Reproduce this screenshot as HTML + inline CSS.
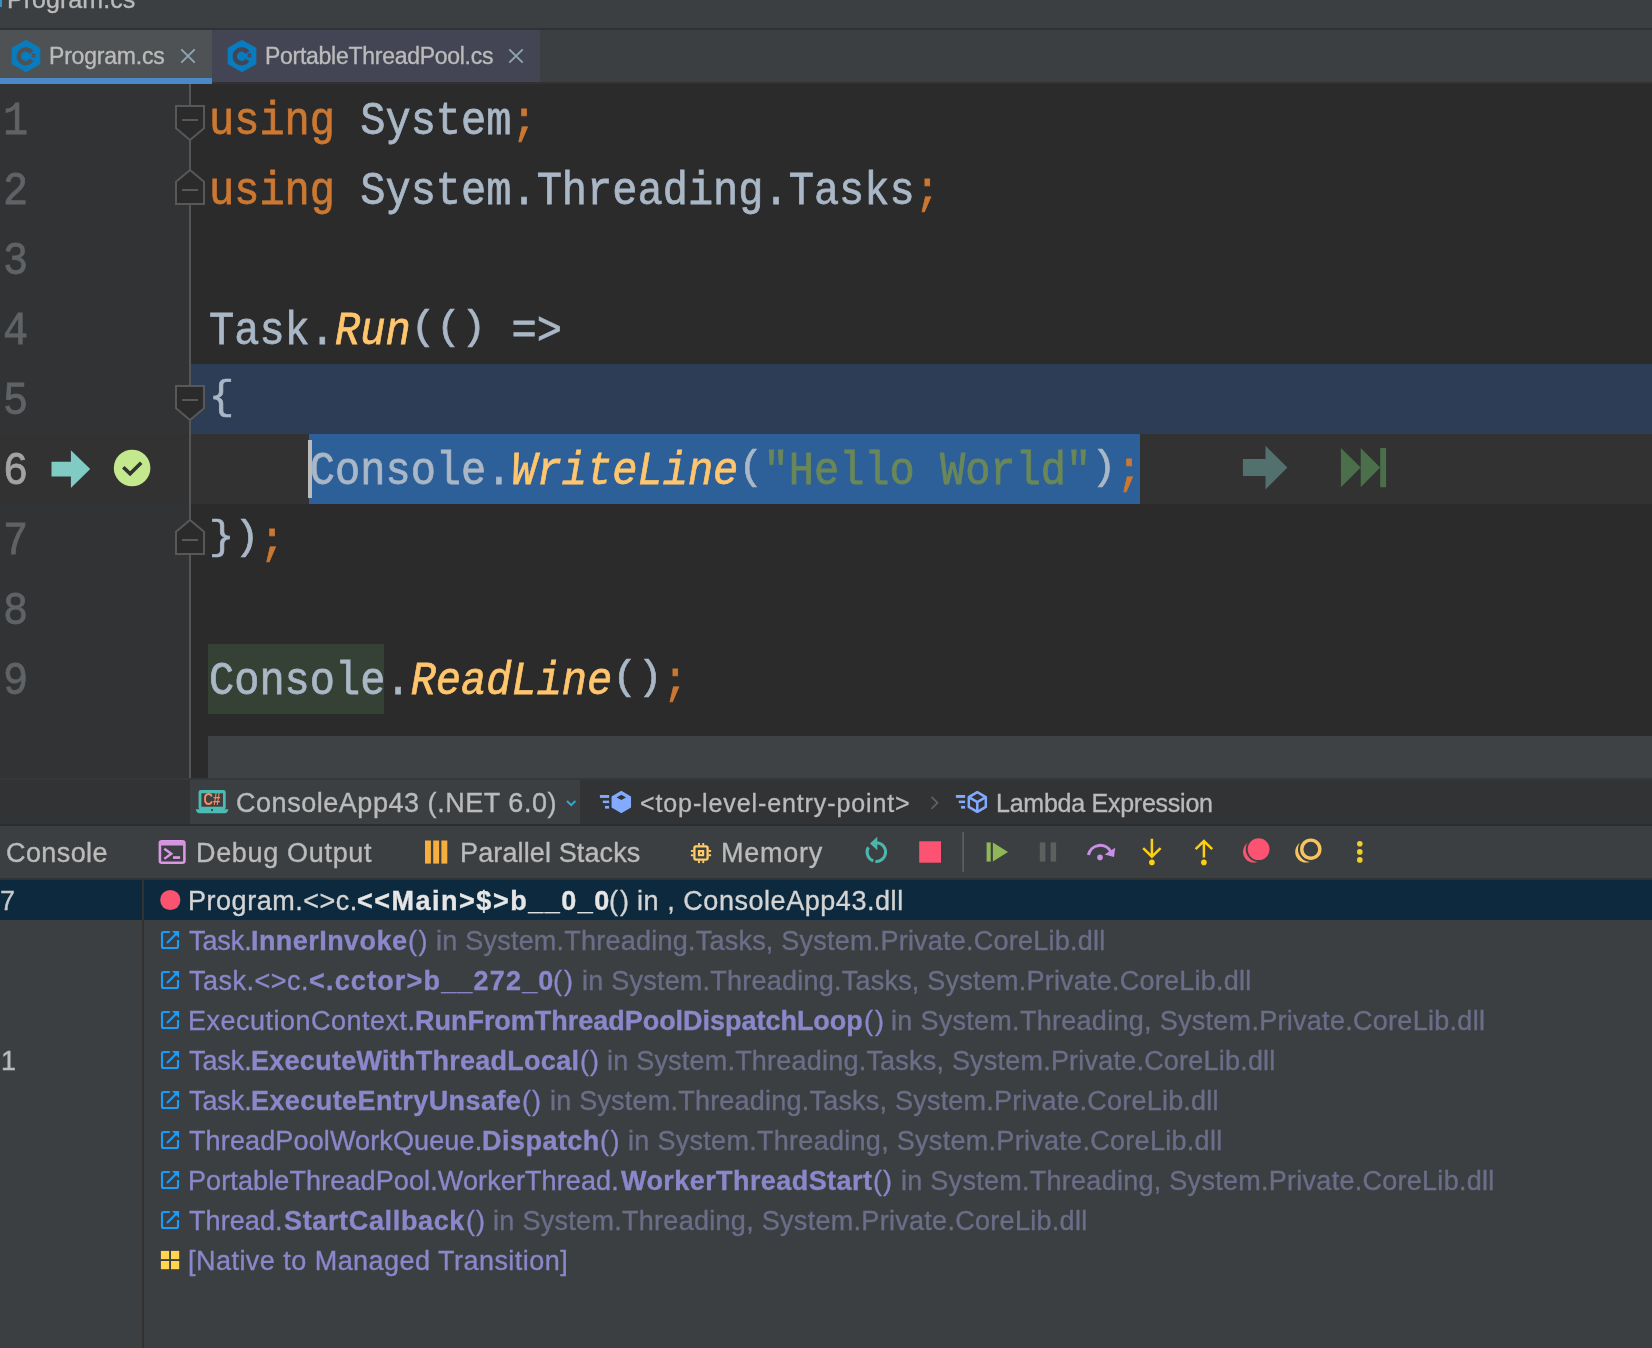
<!DOCTYPE html>
<html>
<head>
<meta charset="utf-8">
<title>Rider</title>
<style>
*{box-sizing:border-box;margin:0;padding:0}
html,body{width:1652px;height:1348px;overflow:hidden;background:#3c3f41}
body{position:relative;font-family:"Liberation Sans",sans-serif;color:#bbbbbb}
.a{position:absolute}
.t{position:absolute;white-space:pre;font-family:"Liberation Sans",sans-serif;will-change:transform;-webkit-text-stroke:0.35px currentColor}
svg{position:absolute;overflow:visible}
.ln,.code{position:absolute;font-family:"Liberation Mono",monospace;font-size:42px;line-height:70px;height:70px;white-space:pre;transform-origin:0 9.6px;transform:scaleY(1.11);-webkit-text-stroke:0.7px currentColor;will-change:transform}
.ln{left:3.4px;color:#606366}
.code{left:209px;color:#a9b7c6}
.p{display:inline-block;transform:scaleY(.86);transform-origin:50% 14px}
.k{color:#cc7832}
.m{color:#ffc66d;font-style:italic}
.s{color:#6a8759}
</style>
</head>
<body>
<div class="a" style="left:0px;top:0px;width:1652px;height:28px;background:#3c3f41;"></div>
<div class="a" style="left:0px;top:0px;width:1.5px;height:7px;background:#3592c4;"></div>
<div class="a" style="left:0px;top:28px;width:1652px;height:2px;background:#313233;"></div>
<div class="a" style="left:0px;top:30px;width:1652px;height:52px;background:#3c3f41;"></div>
<div class="a" style="left:0px;top:30px;width:212px;height:52px;background:#4e5254;"></div>
<div class="a" style="left:212px;top:30px;width:328px;height:52px;background:#434554;"></div>
<div class="a" style="left:0px;top:82px;width:1652px;height:2px;background:#323232;"></div>
<div class="a" style="left:0px;top:78px;width:212px;height:6px;background:#4a88c7;"></div>
<svg style="left:0;top:0" width="1652" height="100"><polygon points="26.00,40.20 39.90,48.10 39.90,63.90 26.00,71.80 12.10,63.90 12.10,48.10" fill="#087cbf" stroke="#087cbf" stroke-width="0.8" stroke-linejoin="round"/><path d="M31.49 52.54 A6.9 6.9 0 1 0 31.49 60.06" fill="none" stroke="#4e5254" stroke-width="4.4"/><g stroke="#4e5254" stroke-width="0.9" fill="none"><path d="M32.6 53.199999999999996V57.6M34.4 53.199999999999996V57.6M31.5 54.5H35.5M31.5 56.3H35.5"/></g></svg>
<svg style="left:0;top:0" width="1652" height="100"><polygon points="242.00,40.20 255.90,48.10 255.90,63.90 242.00,71.80 228.10,63.90 228.10,48.10" fill="#087cbf" stroke="#087cbf" stroke-width="0.8" stroke-linejoin="round"/><path d="M247.49 52.54 A6.9 6.9 0 1 0 247.49 60.06" fill="none" stroke="#434554" stroke-width="4.4"/><g stroke="#434554" stroke-width="0.9" fill="none"><path d="M248.6 53.199999999999996V57.6M250.4 53.199999999999996V57.6M247.5 54.5H251.5M247.5 56.3H251.5"/></g></svg>
<svg style="left:0;top:0" width="1652" height="100"><path d="M181.3 49.3L194.7 62.7M194.7 49.3L181.3 62.7" stroke="#8fa6b1" stroke-width="1.9" fill="none"/></svg>
<svg style="left:0;top:0" width="1652" height="100"><path d="M509.3 49.3L522.7 62.7M522.7 49.3L509.3 62.7" stroke="#8fa6b1" stroke-width="1.9" fill="none"/></svg>
<div class="a" style="left:0px;top:84px;width:1652px;height:695px;background:#2b2b2b;"></div>
<div class="a" style="left:0px;top:84px;width:190px;height:695px;background:#313335;"></div>
<div class="a" style="left:191px;top:364px;width:1461px;height:70px;background:#2e3d56;"></div>
<div class="a" style="left:0px;top:434px;width:1652px;height:70px;background:#323232;"></div>
<div class="a" style="left:309px;top:434px;width:831px;height:70px;background:#2d5f99;"></div>
<div class="a" style="left:208px;top:644px;width:176px;height:70px;background:#344134;"></div>
<div class="a" style="left:208px;top:736px;width:1444px;height:43px;background:#3e4244;"></div>
<div class="a" style="left:189px;top:84px;width:2px;height:695px;background:#555555;"></div>
<div class="a" style="left:308px;top:440px;width:4px;height:58px;background:#bbbbbb;"></div>
<div class="ln" style="top:84px;color:#606366">1</div>
<div class="code" style="top:84px"><span class="k">using</span> System<span class="k">;</span></div>
<div class="ln" style="top:154px;color:#606366">2</div>
<div class="code" style="top:154px"><span class="k">using</span> System.Threading.Tasks<span class="k">;</span></div>
<div class="ln" style="top:224px;color:#606366">3</div>
<div class="ln" style="top:294px;color:#606366">4</div>
<div class="code" style="top:294px">Task.<span class="m">Run</span><span class="p">(</span><span class="p">(</span><span class="p">)</span> =&gt;</div>
<div class="ln" style="top:364px;color:#606366">5</div>
<div class="code" style="top:364px"><span class="p">{</span></div>
<div class="ln" style="top:434px;color:#a4a3a3">6</div>
<div class="code" style="top:434px">    Console.<span class="m">WriteLine</span><span class="p">(</span><span class="s">"Hello World"</span><span class="p">)</span><span class="k">;</span></div>
<div class="ln" style="top:504px;color:#606366">7</div>
<div class="code" style="top:504px"><span class="p">}</span><span class="p">)</span><span class="k">;</span></div>
<div class="ln" style="top:574px;color:#606366">8</div>
<div class="ln" style="top:644px;color:#606366">9</div>
<div class="code" style="top:644px">Console.<span class="m">ReadLine</span><span class="p">(</span><span class="p">)</span><span class="k">;</span></div>
<svg style="left:0;top:0" width="300" height="800"><path d="M176 106H204V128.3L190 140L176 128.3Z" fill="#2b2b2b" stroke="#585858" stroke-width="2"/><path d="M182 120H198" stroke="#585858" stroke-width="2"/></svg>
<svg style="left:0;top:0" width="300" height="800"><path d="M190 170L204 181.7V204H176V181.7Z" fill="#2b2b2b" stroke="#585858" stroke-width="2"/><path d="M182 190H198" stroke="#585858" stroke-width="2"/></svg>
<svg style="left:0;top:0" width="300" height="800"><path d="M176 386H204V408.3L190 420L176 408.3Z" fill="#2b2b2b" stroke="#585858" stroke-width="2"/><path d="M182 400H198" stroke="#585858" stroke-width="2"/></svg>
<svg style="left:0;top:0" width="300" height="800"><path d="M190 520L204 531.7V554H176V531.7Z" fill="#2b2b2b" stroke="#585858" stroke-width="2"/><path d="M182 540H198" stroke="#585858" stroke-width="2"/></svg>
<svg style="left:0;top:0" width="1652" height="800"><path d="M51.5 461.8H70.9V450.3L90.2 469L70.9 488V476.4H51.5Z" fill="#80cbc4"/><circle cx="132.1" cy="468" r="18.3" fill="#c3e88d"/><path d="M123.3 467.3L130.1 473.8L141.2 462.8" fill="none" stroke="#323232" stroke-width="3.6"/><path d="M1242.9 459H1265.5V445.8L1287.4 467.4L1265.5 489.4V476H1242.9Z" fill="#52706e"/><path d="M1340.9 447.9L1360.7 467.6L1340.9 487.3ZM1360.7 447.9L1380.2 467.6L1360.7 487.3ZM1380.2 447.9H1386.1V487.3H1380.2Z" fill="#4a6f4a"/></svg>
<div class="a" style="left:0px;top:780px;width:1652px;height:46px;background:#313335;"></div>
<div class="a" style="left:0px;top:778px;width:1652px;height:2px;background:#35383a;"></div>
<div class="a" style="left:190px;top:780px;width:390px;height:44px;background:#3c3f41;"></div>
<div class="a" style="left:0px;top:824px;width:1652px;height:2px;background:#2b2d2e;"></div>
<svg style="left:0;top:0" width="1652" height="900"><rect x="198.6" y="789.9" width="27.1" height="20" rx="2.4" fill="#4dbbb1"/><rect x="201.4" y="793.3" width="21.6" height="13.4" fill="#3c3f41"/><path d="M195.8 809.2H228.3C228.3 811.5 226.5 813.2 224.8 813.2H199.3C197.5 813.2 195.8 811.5 195.8 809.2Z" fill="#4dbbb1"/><circle cx="212" cy="810" r="1" fill="#3c2a2e"/><text x="203.6" y="805.4" font-family="Liberation Sans" font-weight="700" font-size="15.6" fill="#fb8c5f" textLength="16.8" lengthAdjust="spacingAndGlyphs">C#</text><path d="M567 801L571.2 805.2L575.4 801" fill="none" stroke="#2fa9d1" stroke-width="2"/></svg>
<svg style="left:0;top:0" width="1652" height="900"><rect x="599.9" y="795" width="9.2" height="2.9" fill="#82aaff"/><rect x="602.8" y="800.6" width="6.3" height="2.5" fill="#82aaff"/><rect x="605.0" y="805.9" width="4.1" height="2.7" fill="#82aaff"/><polygon points="621.30,790.80 631.05,796.40 631.05,807.60 621.30,813.20 611.55,807.60 611.55,796.40" fill="#82aaff"/><polygon points="621.2999999999998,794.6999999999999 625.9999999999999,797.4 621.2999999999998,800.1 616.5999999999998,797.4" fill="#313335"/></svg>
<svg style="left:0;top:0" width="1652" height="900"><rect x="955.9" y="795" width="9.2" height="2.9" fill="#82aaff"/><rect x="958.8" y="800.6" width="6.3" height="2.5" fill="#82aaff"/><rect x="961.0" y="805.9" width="4.1" height="2.7" fill="#82aaff"/><polygon points="977.30,792.20 985.80,797.10 985.80,806.90 977.30,811.80 968.80,806.90 968.80,797.10" fill="none" stroke="#82aaff" stroke-width="2.5" stroke-linejoin="round"/><path d="M968.7999999999998 797.1L977.2999999999998 802L985.7999999999998 797.1M977.2999999999998 802V811.8" fill="none" stroke="#82aaff" stroke-width="2.5"/></svg>
<svg style="left:0;top:0" width="1652" height="900"><path d="M931.5 796.8L937.5 802.8L931.5 808.8" fill="none" stroke="#606365" stroke-width="1.7"/></svg>
<div class="a" style="left:0px;top:826px;width:1652px;height:52px;background:#3c3f41;"></div>
<div class="a" style="left:0px;top:878px;width:1652px;height:2px;background:#323232;"></div>
<svg style="left:0;top:0" width="1652" height="900"><rect x="159.9" y="841.2" width="24.5" height="21.6" rx="2" fill="none" stroke="#d997e5" stroke-width="2.6"/><rect x="159.9" y="841.2" width="24.5" height="4.3" fill="#d196dc"/><path d="M164.3 848.7L171.3 853.8L164.3 858.9" fill="none" stroke="#d997e5" stroke-width="2.4"/><rect x="173" y="856.2" width="7.1" height="2.7" fill="#d997e5"/><rect x="425" y="840.5" width="5.9" height="23.1" fill="#f6ae3e"/><rect x="433.2" y="840.5" width="5.9" height="23.1" fill="#f6ae3e"/><rect x="441.4" y="840.5" width="5.9" height="23.1" fill="#f6ae3e"/><rect x="694.4" y="846.4" width="13.2" height="13.2" rx="1.5" fill="none" stroke="#ffcb6b" stroke-width="2.3"/><rect x="697.9" y="850" width="6.3" height="6.2" fill="#ffcb6b"/><rect x="700.2" y="852.3" width="1.7" height="1.7" fill="#2b2f3a"/><rect x="698" y="843" width="1.9" height="2.6" fill="#ffcb6b"/><rect x="698" y="860.5" width="1.9" height="2.6" fill="#ffcb6b"/><rect x="702.3" y="843" width="1.9" height="2.6" fill="#ffcb6b"/><rect x="702.3" y="860.5" width="1.9" height="2.6" fill="#ffcb6b"/><rect x="690.9" y="850" width="2.6" height="1.9" fill="#ffcb6b"/><rect x="708.5" y="850" width="2.6" height="1.9" fill="#ffcb6b"/><rect x="690.9" y="854.3" width="2.6" height="1.9" fill="#ffcb6b"/><rect x="708.5" y="854.3" width="2.6" height="1.9" fill="#ffcb6b"/><path d="M877 842.7A9.4 9.4 0 1 1 875.35 861.43" fill="none" stroke="#4db6ac" stroke-width="3"/><path d="M873.3 860.9A9.4 9.4 0 0 1 868.4 847.3" fill="none" stroke="#4db6ac" stroke-width="3"/><path d="M877.3 836.8V850.2L870 843.5Z" fill="#4db6ac"/><rect x="919.2" y="841.3" width="21.8" height="21.4" fill="#fb5371"/><rect x="962.2" y="832" width="1.8" height="39.8" fill="#5a5d5f"/><rect x="986.6" y="842.4" width="4.1" height="19.2" fill="#90b757"/><path d="M992.9 842.4L1008 852L992.9 861.6Z" fill="#90b757"/><rect x="1039.8" y="842.4" width="5.5" height="19.2" fill="#5e6060"/><rect x="1050.7" y="842.4" width="5.4" height="19.2" fill="#5e6060"/><path d="M1088.45 855A12 12 0 0 1 1111.1 852.3" fill="none" stroke="#c88fe6" stroke-width="3.1"/><path d="M1115.2 847.8L1114 856.9L1104.6 854.6Z" fill="#c88fe6"/><circle cx="1100" cy="857.4" r="2.8" fill="#c88fe6"/><path d="M1151.9 838.7V856M1143.2 848.2L1151.9 856.7L1160.6 848.2" fill="none" stroke="#fccf14" stroke-width="2.5"/><circle cx="1151.9" cy="862.4" r="2.8" fill="#fccf14"/><path d="M1203.9 857.4V841.6M1195.6 849.2L1203.9 841L1212.2 849.2" fill="none" stroke="#fccf14" stroke-width="2.5"/><circle cx="1203.9" cy="862.4" r="2.8" fill="#fccf14"/><circle cx="1253.8" cy="851.8" r="10.8" fill="#fb5371"/><circle cx="1258.6" cy="849.2" r="12.8" fill="#3c3f41"/><circle cx="1258.6" cy="849.2" r="10.9" fill="#fb5371"/><circle cx="1306" cy="851.8" r="10.8" fill="#f6c560"/><circle cx="1310.8" cy="849.2" r="12.8" fill="#3c3f41"/><circle cx="1310.8" cy="849.2" r="9.05" fill="none" stroke="#f6c560" stroke-width="3.4"/><circle cx="1359.8" cy="843.8" r="2.8" fill="#f0ce2b"/><circle cx="1359.8" cy="851.9" r="2.8" fill="#f0ce2b"/><circle cx="1359.8" cy="859.9" r="2.8" fill="#f0ce2b"/></svg>
<div class="a" style="left:0px;top:880px;width:1652px;height:468px;background:#3c3f41;"></div>
<div class="a" style="left:0px;top:880px;width:1652px;height:40px;background:#0d293e;"></div>
<div class="a" style="left:142px;top:880px;width:2px;height:468px;background:#343231;"></div>
<svg style="left:0;top:0" width="1652" height="1348"><circle cx="170.3" cy="900" r="10.1" fill="#fa5370"/><path d="M169.8 932H163.5A1.5 1.5 0 0 0 162 933.5V946.5A1.5 1.5 0 0 0 163.5 948H176.5A1.5 1.5 0 0 0 178 946.5V940M167 943L177 933" fill="none" stroke="#1e9bf5" stroke-width="2.1"/><path d="M172 931H179V938Z" fill="#1e9bf5"/><path d="M169.8 972H163.5A1.5 1.5 0 0 0 162 973.5V986.5A1.5 1.5 0 0 0 163.5 988H176.5A1.5 1.5 0 0 0 178 986.5V980M167 983L177 973" fill="none" stroke="#1e9bf5" stroke-width="2.1"/><path d="M172 971H179V978Z" fill="#1e9bf5"/><path d="M169.8 1012H163.5A1.5 1.5 0 0 0 162 1013.5V1026.5A1.5 1.5 0 0 0 163.5 1028H176.5A1.5 1.5 0 0 0 178 1026.5V1020M167 1023L177 1013" fill="none" stroke="#1e9bf5" stroke-width="2.1"/><path d="M172 1011H179V1018Z" fill="#1e9bf5"/><path d="M169.8 1052H163.5A1.5 1.5 0 0 0 162 1053.5V1066.5A1.5 1.5 0 0 0 163.5 1068H176.5A1.5 1.5 0 0 0 178 1066.5V1060M167 1063L177 1053" fill="none" stroke="#1e9bf5" stroke-width="2.1"/><path d="M172 1051H179V1058Z" fill="#1e9bf5"/><path d="M169.8 1092H163.5A1.5 1.5 0 0 0 162 1093.5V1106.5A1.5 1.5 0 0 0 163.5 1108H176.5A1.5 1.5 0 0 0 178 1106.5V1100M167 1103L177 1093" fill="none" stroke="#1e9bf5" stroke-width="2.1"/><path d="M172 1091H179V1098Z" fill="#1e9bf5"/><path d="M169.8 1132H163.5A1.5 1.5 0 0 0 162 1133.5V1146.5A1.5 1.5 0 0 0 163.5 1148H176.5A1.5 1.5 0 0 0 178 1146.5V1140M167 1143L177 1133" fill="none" stroke="#1e9bf5" stroke-width="2.1"/><path d="M172 1131H179V1138Z" fill="#1e9bf5"/><path d="M169.8 1172H163.5A1.5 1.5 0 0 0 162 1173.5V1186.5A1.5 1.5 0 0 0 163.5 1188H176.5A1.5 1.5 0 0 0 178 1186.5V1180M167 1183L177 1173" fill="none" stroke="#1e9bf5" stroke-width="2.1"/><path d="M172 1171H179V1178Z" fill="#1e9bf5"/><path d="M169.8 1212H163.5A1.5 1.5 0 0 0 162 1213.5V1226.5A1.5 1.5 0 0 0 163.5 1228H176.5A1.5 1.5 0 0 0 178 1226.5V1220M167 1223L177 1213" fill="none" stroke="#1e9bf5" stroke-width="2.1"/><path d="M172 1211H179V1218Z" fill="#1e9bf5"/><rect x="160.9" y="1250.9" width="8.2" height="8.2" fill="#ffd54f"/><rect x="171" y="1250.9" width="8.2" height="8.2" fill="#ffd54f"/><rect x="160.9" y="1261" width="8.2" height="8.2" fill="#ffd54f"/><rect x="171" y="1261" width="8.2" height="8.2" fill="#ffd54f"/></svg>
<div class="t" style="left:7.2px;top:-13.3px;font-size:25px;line-height:25px;font-weight:400;color:#bbbbbb;letter-spacing:0.044px">Program.cs</div>
<div class="t" style="left:49.2px;top:45.3px;font-size:23px;line-height:23px;font-weight:400;color:#bbbbbb;letter-spacing:-0.2px">Program.cs</div>
<div class="t" style="left:264.8px;top:45.3px;font-size:23px;line-height:23px;font-weight:400;color:#bbbbbb;letter-spacing:-0.275px">PortableThreadPool.cs</div>
<div class="t" style="left:236.2px;top:790.2px;font-size:27px;line-height:27px;font-weight:400;color:#bbbbbb;letter-spacing:0.536px">ConsoleApp43 (.NET 6.0)</div>
<div class="t" style="left:639.5px;top:791.2px;font-size:25px;line-height:25px;font-weight:400;color:#bbbbbb;letter-spacing:0.886px">&lt;top-level-entry-point&gt;</div>
<div class="t" style="left:996.0px;top:791.2px;font-size:25px;line-height:25px;font-weight:400;color:#bbbbbb;letter-spacing:-0.25px">Lambda Expression</div>
<div class="t" style="left:5.9px;top:839.6px;font-size:27px;line-height:27px;font-weight:400;color:#bbbbbb;letter-spacing:0.4px">Console</div>
<div class="t" style="left:195.8px;top:839.6px;font-size:27px;line-height:27px;font-weight:400;color:#bbbbbb;letter-spacing:0.673px">Debug Output</div>
<div class="t" style="left:459.8px;top:839.6px;font-size:27px;line-height:27px;font-weight:400;color:#bbbbbb;letter-spacing:0.121px">Parallel Stacks</div>
<div class="t" style="left:721.0px;top:839.6px;font-size:27px;line-height:27px;font-weight:400;color:#bbbbbb;letter-spacing:0.74px">Memory</div>
<div class="t" style="left:-0.5px;top:888.0px;font-size:27px;line-height:27px;font-weight:400;color:#c8c8c8;letter-spacing:0.0px">7</div>
<div class="t" style="left:0.5px;top:1048.0px;font-size:27px;line-height:27px;font-weight:400;color:#bbbbbb;letter-spacing:0.0px">1</div>
<div class="t" style="left:188.3px;top:888.0px;font-size:27px;line-height:27px;font-weight:400;color:#d4d4d4;letter-spacing:0.527px">Program.&lt;&gt;c.</div>
<div class="t" style="left:357.4px;top:888.0px;font-size:27px;line-height:27px;font-weight:700;color:#e6e6e6;letter-spacing:1.507px">&lt;&lt;Main&gt;$&gt;b__0_0</div>
<div class="t" style="left:609.0px;top:888.0px;font-size:27px;line-height:27px;font-weight:400;color:#d4d4d4;letter-spacing:2.1px">()</div>
<div class="t" style="left:637.0px;top:888.0px;font-size:27px;line-height:27px;font-weight:400;color:#d4d4d4;letter-spacing:0.55px">in , ConsoleApp43.dll</div>
<div class="t" style="left:189.3px;top:928.0px;font-size:27px;line-height:27px;font-weight:400;color:#8b87cb;letter-spacing:-0.075px">Task.</div>
<div class="t" style="left:251.3px;top:928.0px;font-size:27px;line-height:27px;font-weight:700;color:#8b87cb;letter-spacing:0.44px">InnerInvoke</div>
<div class="t" style="left:408.0px;top:928.0px;font-size:27px;line-height:27px;font-weight:400;color:#8b87cb;letter-spacing:1.5px">()</div>
<div class="t" style="left:436.1px;top:928.0px;font-size:27px;line-height:27px;font-weight:400;color:#6c6d88;letter-spacing:0.229px">in System.Threading.Tasks, System.Private.CoreLib.dll</div>
<div class="t" style="left:189.3px;top:968.0px;font-size:27px;line-height:27px;font-weight:400;color:#8b87cb;letter-spacing:0.5px">Task.&lt;&gt;c.</div>
<div class="t" style="left:308.6px;top:968.0px;font-size:27px;line-height:27px;font-weight:700;color:#8b87cb;letter-spacing:1.18px">&lt;.cctor&gt;b__272_0</div>
<div class="t" style="left:553.0px;top:968.0px;font-size:27px;line-height:27px;font-weight:400;color:#8b87cb;letter-spacing:1.9px">()</div>
<div class="t" style="left:582.1px;top:968.0px;font-size:27px;line-height:27px;font-weight:400;color:#6c6d88;letter-spacing:0.229px">in System.Threading.Tasks, System.Private.CoreLib.dll</div>
<div class="t" style="left:188.3px;top:1008.0px;font-size:27px;line-height:27px;font-weight:400;color:#8b87cb;letter-spacing:0.5px">ExecutionContext.</div>
<div class="t" style="left:415.3px;top:1008.0px;font-size:27px;line-height:27px;font-weight:700;color:#8b87cb;letter-spacing:-0.025px">RunFromThreadPoolDispatchLoop</div>
<div class="t" style="left:863.5px;top:1008.0px;font-size:27px;line-height:27px;font-weight:400;color:#8b87cb;letter-spacing:2.0px">()</div>
<div class="t" style="left:891.4px;top:1008.0px;font-size:27px;line-height:27px;font-weight:400;color:#6c6d88;letter-spacing:0.287px">in System.Threading, System.Private.CoreLib.dll</div>
<div class="t" style="left:189.3px;top:1048.0px;font-size:27px;line-height:27px;font-weight:400;color:#8b87cb;letter-spacing:-0.075px">Task.</div>
<div class="t" style="left:251.3px;top:1048.0px;font-size:27px;line-height:27px;font-weight:700;color:#8b87cb;letter-spacing:0.267px">ExecuteWithThreadLocal</div>
<div class="t" style="left:579.5px;top:1048.0px;font-size:27px;line-height:27px;font-weight:400;color:#8b87cb;letter-spacing:0.9px">()</div>
<div class="t" style="left:606.9px;top:1048.0px;font-size:27px;line-height:27px;font-weight:400;color:#6c6d88;letter-spacing:0.213px">in System.Threading.Tasks, System.Private.CoreLib.dll</div>
<div class="t" style="left:189.3px;top:1088.0px;font-size:27px;line-height:27px;font-weight:400;color:#8b87cb;letter-spacing:-0.075px">Task.</div>
<div class="t" style="left:251.3px;top:1088.0px;font-size:27px;line-height:27px;font-weight:700;color:#8b87cb;letter-spacing:0.424px">ExecuteEntryUnsafe</div>
<div class="t" style="left:522.1px;top:1088.0px;font-size:27px;line-height:27px;font-weight:400;color:#8b87cb;letter-spacing:0.9px">()</div>
<div class="t" style="left:549.5px;top:1088.0px;font-size:27px;line-height:27px;font-weight:400;color:#6c6d88;letter-spacing:0.217px">in System.Threading.Tasks, System.Private.CoreLib.dll</div>
<div class="t" style="left:189.3px;top:1128.0px;font-size:27px;line-height:27px;font-weight:400;color:#8b87cb;letter-spacing:0.132px">ThreadPoolWorkQueue.</div>
<div class="t" style="left:482.2px;top:1128.0px;font-size:27px;line-height:27px;font-weight:700;color:#8b87cb;letter-spacing:0.471px">Dispatch</div>
<div class="t" style="left:600.1px;top:1128.0px;font-size:27px;line-height:27px;font-weight:400;color:#8b87cb;letter-spacing:1.4px">()</div>
<div class="t" style="left:627.5px;top:1128.0px;font-size:27px;line-height:27px;font-weight:400;color:#6c6d88;letter-spacing:0.293px">in System.Threading, System.Private.CoreLib.dll</div>
<div class="t" style="left:188.3px;top:1168.0px;font-size:27px;line-height:27px;font-weight:400;color:#8b87cb;letter-spacing:0.113px">PortableThreadPool.WorkerThread.</div>
<div class="t" style="left:620.7px;top:1168.0px;font-size:27px;line-height:27px;font-weight:700;color:#8b87cb;letter-spacing:0.425px">WorkerThreadStart</div>
<div class="t" style="left:873.1px;top:1168.0px;font-size:27px;line-height:27px;font-weight:400;color:#8b87cb;letter-spacing:0.9px">()</div>
<div class="t" style="left:900.5px;top:1168.0px;font-size:27px;line-height:27px;font-weight:400;color:#6c6d88;letter-spacing:0.272px">in System.Threading, System.Private.CoreLib.dll</div>
<div class="t" style="left:189.3px;top:1208.0px;font-size:27px;line-height:27px;font-weight:400;color:#8b87cb;letter-spacing:0.083px">Thread.</div>
<div class="t" style="left:283.7px;top:1208.0px;font-size:27px;line-height:27px;font-weight:700;color:#8b87cb;letter-spacing:0.65px">StartCallback</div>
<div class="t" style="left:466.1px;top:1208.0px;font-size:27px;line-height:27px;font-weight:400;color:#8b87cb;letter-spacing:0.9px">()</div>
<div class="t" style="left:492.5px;top:1208.0px;font-size:27px;line-height:27px;font-weight:400;color:#6c6d88;letter-spacing:0.293px">in System.Threading, System.Private.CoreLib.dll</div>
<div class="t" style="left:187.8px;top:1248.0px;font-size:27px;line-height:27px;font-weight:400;color:#8b87cb;letter-spacing:0.466px">[Native to Managed Transition]</div>
</body>
</html>
